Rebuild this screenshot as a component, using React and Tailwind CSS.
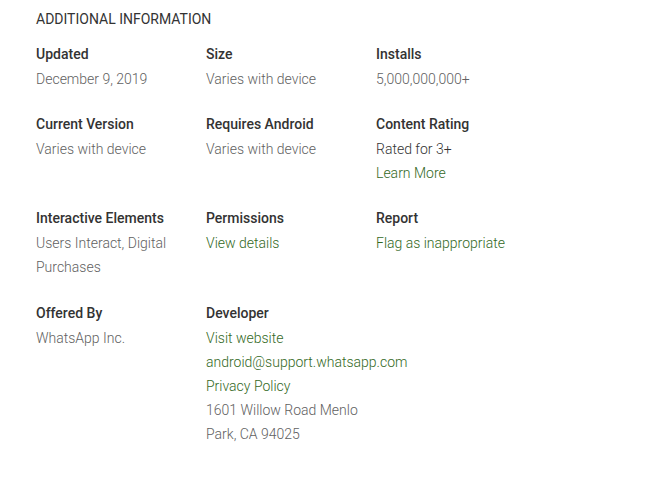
const rows = [
  [
    { label: "Updated", values: [{ text: "December 9, 2019" }] },
    { label: "Size", values: [{ text: "Varies with device" }] },
    { label: "Installs", values: [{ text: "5,000,000,000+" }] },
  ],
  [
    { label: "Current Version", values: [{ text: "Varies with device" }] },
    { label: "Requires Android", values: [{ text: "Varies with device" }] },
    {
      label: "Content Rating",
      values: [{ text: "Rated for 3+", dark: true }, { text: "Learn More", link: true }],
    },
  ],
  [
    { label: "Interactive Elements", values: [{ text: "Users Interact, Digital Purchases" }] },
    { label: "Permissions", values: [{ text: "View details", link: true }] },
    { label: "Report", values: [{ text: "Flag as inappropriate", link: true }] },
  ],
  [
    { label: "Offered By", values: [{ text: "WhatsApp Inc." }] },
    {
      label: "Developer",
      values: [
        { text: "Visit website", link: true },
        { text: "android@support.whatsapp.com", link: true },
        { text: "Privacy Policy", link: true },
        { text: "1601 Willow Road Menlo Park, CA 94025" },
      ],
    },
  ],
];

const Cell = ({ label, values }) => (
  <div className="w-[170px] shrink-0 pr-4">
    <div className="text-[14px] leading-[25px] font-medium text-[#333333]">{label}</div>
    {values.map((v, i) => (
      <div
        key={i}
        className={
          "text-[14px] leading-[24px] font-light " +
          (v.link ? "text-[#33691e] whitespace-nowrap" : v.dark ? "text-[#333333]" : "text-[#616161]")
        }
      >
        {v.text}
      </div>
    ))}
  </div>
);

export default function App() {
  return (
    <div className="w-[653px] h-[480px] bg-white pl-[36px] pt-[9px] font-['Roboto',sans-serif]">
      <h2 className="text-[14px] leading-[20px] font-normal text-[#333333] uppercase mb-[13px]">
        Additional Information
      </h2>
      <div className="flex flex-col gap-[21px]">
        {rows.map((row, i) => (
          <div key={i} className={"flex" + (i === 3 ? " mt-px" : "")}>
            {row.map((c) => (
              <Cell key={c.label} {...c} />
            ))}
          </div>
        ))}
      </div>
    </div>
  );
}
